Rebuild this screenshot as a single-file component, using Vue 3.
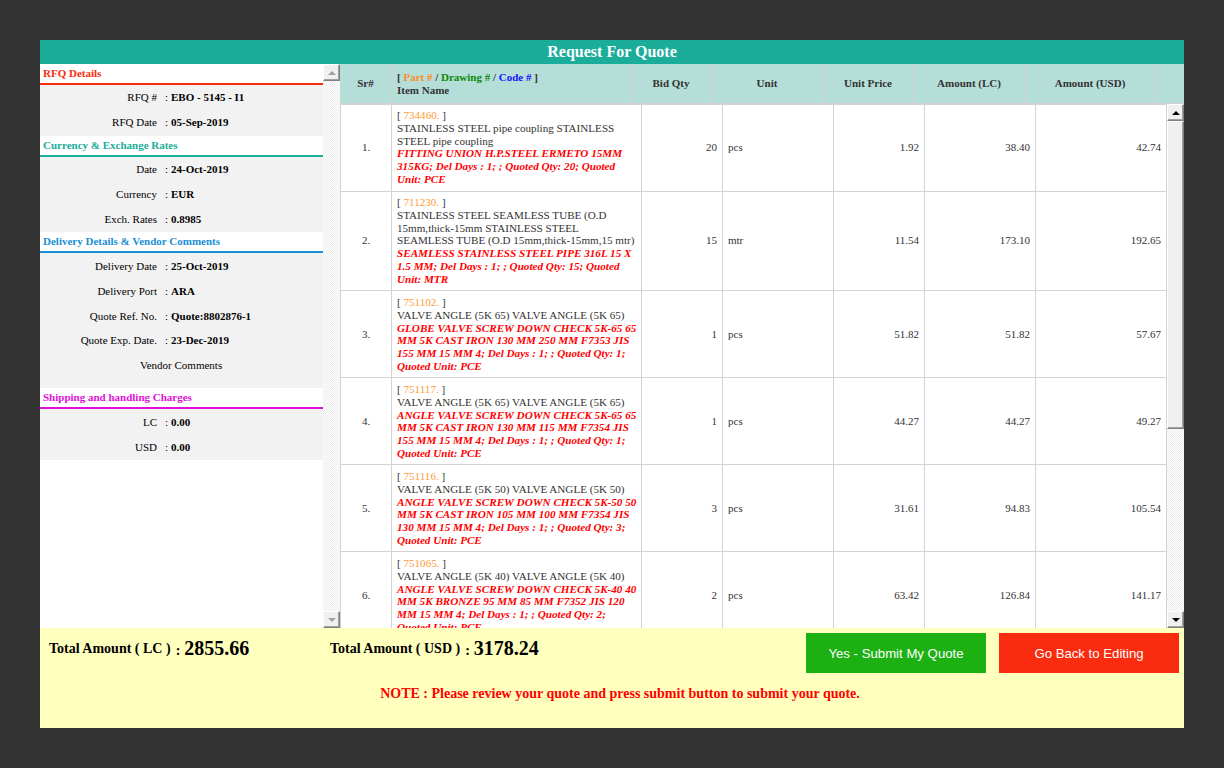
<script setup>
const groups = [
  { title: 'RFQ Details', color: '#f92c10', rows: [['RFQ #', 'EBO - 5145 - I1'], ['RFQ Date', '05-Sep-2019']], cls: 'loose' },
  { title: 'Currency & Exchange Rates', color: '#1aad9a', rows: [['Date', '24-Oct-2019'], ['Currency', 'EUR'], ['Exch. Rates', '0.8985']], cls: '' },
  { title: 'Delivery Details & Vendor Comments', color: '#1a8fd6', rows: [['Delivery Date', '25-Oct-2019'], ['Delivery Port', 'ARA'], ['Quote Ref. No.', 'Quote:8802876-1'], ['Quote Exp. Date.', '23-Dec-2019']], cls: 'delivery', comments: true },
  { title: 'Shipping and handling Charges', color: '#e010d8', rows: [['LC', '0.00'], ['USD', '0.00']], cls: 'shift' }
]
const headers = ['Bid Qty', 'Unit', 'Unit Price', 'Amount (LC)', 'Amount (USD)']
const items = [
  { sr: '1.', part: '734460.', desc: ['STAINLESS STEEL pipe coupling STAINLESS', 'STEEL pipe coupling'], note: ['FITTING UNION H.P.STEEL ERMETO 15MM', '315KG; Del Days : 1; ; Quoted Qty: 20; Quoted', 'Unit: PCE'], qty: '20', unit: 'pcs', price: '1.92', lc: '38.40', usd: '42.74' },
  { sr: '2.', part: '711230.', desc: ['STAINLESS STEEL SEAMLESS TUBE (O.D', '15mm,thick-15mm STAINLESS STEEL', 'SEAMLESS TUBE (O.D 15mm,thick-15mm,15 mtr)'], note: ['SEAMLESS STAINLESS STEEL PIPE 316L 15 X', '1.5 MM; Del Days : 1; ; Quoted Qty: 15; Quoted', 'Unit: MTR'], qty: '15', unit: 'mtr', price: '11.54', lc: '173.10', usd: '192.65', tall: true },
  { sr: '3.', part: '751102.', desc: ['VALVE ANGLE (5K 65) VALVE ANGLE (5K 65)'], note: ['GLOBE VALVE SCREW DOWN CHECK 5K-65 65', 'MM 5K CAST IRON 130 MM 250 MM F7353 JIS', '155 MM 15 MM 4; Del Days : 1; ; Quoted Qty: 1;', 'Quoted Unit: PCE'], qty: '1', unit: 'pcs', price: '51.82', lc: '51.82', usd: '57.67' },
  { sr: '4.', part: '751117.', desc: ['VALVE ANGLE (5K 65) VALVE ANGLE (5K 65)'], note: ['ANGLE VALVE SCREW DOWN CHECK 5K-65 65', 'MM 5K CAST IRON 130 MM 115 MM F7354 JIS', '155 MM 15 MM 4; Del Days : 1; ; Quoted Qty: 1;', 'Quoted Unit: PCE'], qty: '1', unit: 'pcs', price: '44.27', lc: '44.27', usd: '49.27' },
  { sr: '5.', part: '751116.', desc: ['VALVE ANGLE (5K 50) VALVE ANGLE (5K 50)'], note: ['ANGLE VALVE SCREW DOWN CHECK 5K-50 50', 'MM 5K CAST IRON 105 MM 100 MM F7354 JIS', '130 MM 15 MM 4; Del Days : 1; ; Quoted Qty: 3;', 'Quoted Unit: PCE'], qty: '3', unit: 'pcs', price: '31.61', lc: '94.83', usd: '105.54' },
  { sr: '6.', part: '751065.', desc: ['VALVE ANGLE (5K 40) VALVE ANGLE (5K 40)'], note: ['ANGLE VALVE SCREW DOWN CHECK 5K-40 40', 'MM 5K BRONZE 95 MM 85 MM F7352 JIS 120', 'MM 15 MM 4; Del Days : 1; ; Quoted Qty: 2;', 'Quoted Unit: PCE'], qty: '2', unit: 'pcs', price: '63.42', lc: '126.84', usd: '141.17' }
]
</script>

<template>
  <div class="page">
    <div class="frame">
      <h1 class="title">Request For Quote</h1>
      <div class="main">
        <aside class="side">
          <div class="side-body">
            <section v-for="g in groups" :key="g.title">
              <h2 class="sec" :style="{ color: g.color, borderBottomColor: g.color }">{{ g.title }}</h2>
              <div class="kv-group" :class="g.cls">
                <div v-for="r in g.rows" :key="r[0]" class="kv">
                  <span class="k">{{ r[0] }}</span>
                  <span class="c">:</span>
                  <b class="v">{{ r[1] }}</b>
                </div>
                <div v-if="g.comments" class="comments">Vendor Comments</div>
              </div>
            </section>
          </div>
          <div class="sb">
            <div class="btn"><i class="up off"></i></div>
            <div class="track"></div>
            <div class="btn"><i class="down off"></i></div>
          </div>
        </aside>
        <div class="grid-wrap">
          <div class="head">
            <div class="hc sr">Sr#</div>
            <div class="hc item">
              <div>[ <span class="o">Part #</span> / <span class="g">Drawing #</span> / <span class="b">Code #</span> ]</div>
              <div>Item Name</div>
            </div>
            <div v-for="h in headers" :key="h" class="hc">{{ h }}</div>
            <div class="hc end"></div>
          </div>
          <div class="body">
            <div class="rows">
              <div v-for="it in items" :key="it.sr" class="row" :class="{ tall: it.tall }">
                <div class="td ctr">{{ it.sr }}</div>
                <div class="td desc">
                  <div>[ <span class="part">{{ it.part }}</span> ]</div>
                  <div v-for="l in it.desc" :key="l">{{ l }}</div>
                  <div v-for="l in it.note" :key="l" class="note">{{ l }}</div>
                </div>
                <div class="td num">{{ it.qty }}</div>
                <div class="td unit">{{ it.unit }}</div>
                <div class="td num">{{ it.price }}</div>
                <div class="td num">{{ it.lc }}</div>
                <div class="td num">{{ it.usd }}</div>
              </div>
            </div>
            <div class="sb">
              <div class="btn"><i class="up"></i></div>
              <div class="thumb"></div>
              <div class="track"></div>
              <div class="btn"><i class="down"></i></div>
            </div>
          </div>
        </div>
      </div>
      <footer class="foot">
        <div class="foot-top">
          <div class="total first"><span class="lbl">Total Amount ( LC )</span><span class="col">:</span><b class="amt">2855.66</b></div>
          <div class="total"><span class="lbl">Total Amount ( USD )</span><span class="col">:</span><b class="amt">3178.24</b></div>
          <div class="actions">
            <button class="act yes" type="button">Yes - Submit My Quote</button>
            <button class="act no" type="button">Go Back to Editing</button>
          </div>
        </div>
        <p class="foot-note">NOTE : Please review your quote and press submit button to submit your quote.</p>
      </footer>
    </div>
  </div>
</template>

<style>
html, body { background: #333333; }
</style>

<style scoped>
.page {
  width: 1224px;
  height: 768px;
  background: #333333;
  padding: 40px;
  box-sizing: border-box;
  font-family: "Liberation Serif", "Times New Roman", serif;
  font-size: 11px;
  color: #333333;
  overflow: hidden;
}
.frame {
  width: 1144px;
  height: 688px;
  display: flex;
  flex-direction: column;
  background: #ffffff;
}
.title {
  margin: 0;
  height: 24px;
  line-height: 24px;
  background: #1aad9a;
  color: #ffffff;
  font-size: 16px;
  font-weight: bold;
  text-align: center;
  flex: none;
}
.main {
  height: 564px;
  display: flex;
  flex: none;
}
.side {
  width: 300px;
  display: flex;
  flex: none;
}
.side-body {
  width: 283px;
  flex: none;
}
.sec {
  margin: 0;
  height: 21px;
  box-sizing: border-box;
  border-bottom: 2px solid;
  background: #ffffff;
  padding: 3px 0 0 3px;
  font-size: 11px;
  line-height: 13px;
  font-weight: bold;
}
.kv-group {
  background: #f2f2f2;
  color: #000000;
}
.kv-group.loose { padding-bottom: 1px; }
.kv-group.shift { padding-top: 1px; }
.kv-group.delivery { padding-top: 1px; }
.kv {
  display: grid;
  grid-template-columns: 117px 14px 1fr;
  height: 25px;
  line-height: 25px;
}
.delivery .kv {
  height: 24.75px;
  line-height: 24.75px;
}
.k { text-align: right; }
.c { padding-left: 8px; }
.comments {
  height: 35px;
  line-height: 24.75px;
  padding-left: 100px;
}
.sb {
  width: 17px;
  height: 100%;
  flex: none;
  display: flex;
  flex-direction: column;
}
.track {
  flex: 1;
  background: repeating-conic-gradient(#ffffff 0 25%, #ececec 0 50%) 0 0 / 2px 2px;
}
.btn, .thumb {
  box-sizing: border-box;
  background: #f0f0f0;
  border: 1px solid;
  border-color: #ffffff #808080 #808080 #ffffff;
  box-shadow: inset -1px -1px 0 #a0a0a0;
}
.btn {
  height: 17px;
  flex: none;
  display: flex;
  align-items: center;
  justify-content: center;
}
.thumb {
  height: 308px;
  flex: none;
}
.btn i {
  width: 0;
  height: 0;
  border-left: 4px solid transparent;
  border-right: 4px solid transparent;
}
.btn .up { border-bottom: 4px solid #000000; }
.btn .down { border-top: 4px solid #000000; }
.btn .up.off { border-bottom-color: #a0a0a0; }
.btn .down.off { border-top-color: #a0a0a0; }
.grid-wrap {
  width: 844px;
  flex: none;
  display: flex;
  flex-direction: column;
}
.head {
  height: 40px;
  flex: none;
  display: grid;
  grid-template-columns: 52px 239px 81px 111px 91px 111px 131px 28px;
  background: #b5ded9;
  border-bottom: 1px solid #d3d3d3;
  box-sizing: border-box;
  font-weight: bold;
  color: #333333;
}
.hc {
  display: flex;
  align-items: center;
  justify-content: center;
  padding-bottom: 1px;
  border-right: 1px solid #d3d3d3;
}
.hc.end { border-right: 0; }
.hc.item {
  display: block;
  padding: 7px 0 0 5px;
  line-height: 13px;
}
.o { color: #ff8c1a; }
.g { color: #0a8a0a; }
.b { color: #1414ff; }
.body {
  height: 524px;
  display: flex;
  flex: none;
}
.rows {
  width: 827px;
  flex: none;
  overflow: hidden;
  border-left: 1px solid #d3d3d3;
  border-top: 1px solid #d3d3d3;
  box-sizing: border-box;
}
.row {
  height: 87px;
  display: grid;
  grid-template-columns: 51px 250px 81px 111px 91px 111px 131px;
  border-bottom: 1px solid #d3d3d3;
  box-sizing: border-box;
}
.row.tall { height: 99px; }
.row:first-child .td, .row.tall .td { padding-bottom: 2px; }
.td {
  border-right: 1px solid #d3d3d3;
  display: flex;
  align-items: center;
  min-width: 0;
}
.ctr { justify-content: center; }
.num { justify-content: flex-end; padding-right: 5px; }
.unit { padding-left: 5px; }
.td.desc {
  display: block;
  padding: 5px 0 0 5px;
  font-size: 11.1px;
  line-height: 12.75px;
  white-space: nowrap;
}
.row:first-child .td.desc, .row.tall .td.desc { padding-top: 4px; }
.part { color: #ff9a33; }
.note {
  color: #ff0000;
  font-size: 11.15px;
  font-weight: bold;
  font-style: italic;
}
.foot {
  flex: 1;
  background: #ffffbe;
  color: #000000;
  display: flex;
  flex-direction: column;
}
.foot-top {
  display: flex;
  align-items: flex-start;
  padding: 5px 5px 0 9px;
}
.total {
  font-size: 14px;
  font-weight: bold;
  line-height: 30px;
  white-space: nowrap;
}
.total.first { width: 281px; flex: none; }
.lbl { vertical-align: 2px; }
.col { margin: 0 4px 0 5px; }
.amt { font-size: 20px; }
.actions {
  margin-left: auto;
  display: flex;
  gap: 13px;
}
.act {
  width: 180px;
  height: 40px;
  border: 0;
  padding: 0;
  color: #ffffff;
  font-family: "Liberation Sans", Arial, sans-serif;
  font-size: 13.2px;
}
.yes { background: #1db013; }
.no { background: #f92c10; }
.foot-note {
  margin: 13px 0 0;
  padding-left: 16px;
  text-align: center;
  color: #ff0000;
  font-size: 14px;
  font-weight: bold;
  line-height: 16px;
}
</style>
